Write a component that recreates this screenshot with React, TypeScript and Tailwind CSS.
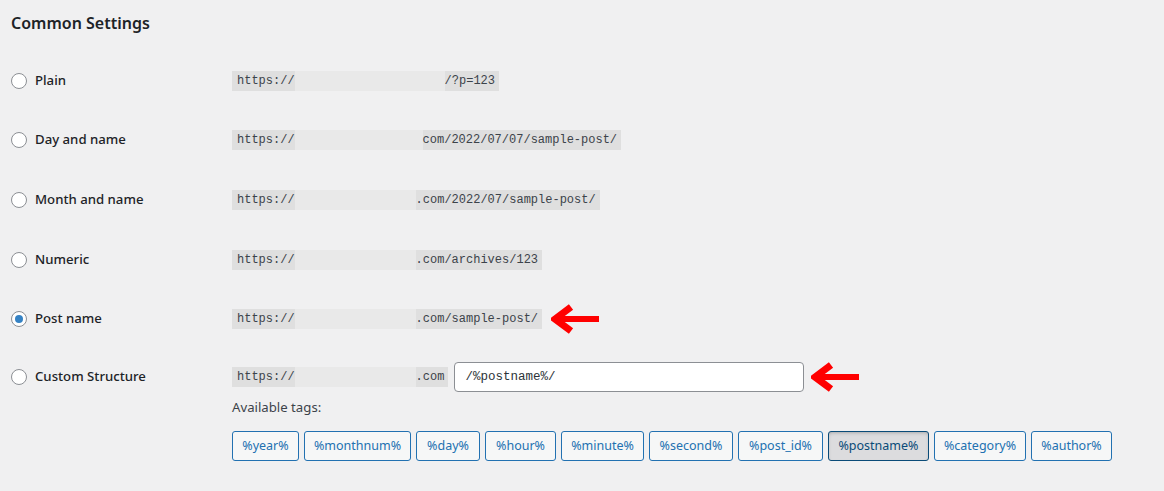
import React from "react";

const rows = [
  { label: "Plain", blur: "w-[150px]", rest: "/?p=123", checked: false },
  { label: "Day and name", blur: "w-[128px]", rest: "com/2022/07/07/sample-post/", checked: false },
  { label: "Month and name", blur: "w-[121px]", rest: ".com/2022/07/sample-post/", checked: false },
  { label: "Numeric", blur: "w-[121px]", rest: ".com/archives/123", checked: false },
  { label: "Post name", blur: "w-[121px]", rest: ".com/sample-post/", checked: true, arrow: true },
];

const tags = [
  { name: "%year%", w: "w-[67px]" },
  { name: "%monthnum%", w: "w-[107px]" },
  { name: "%day%", w: "w-[64px]" },
  { name: "%hour%", w: "w-[71px]" },
  { name: "%minute%", w: "w-[83px]" },
  { name: "%second%", w: "w-[84px]" },
  { name: "%post_id%", w: "w-[85px]" },
  { name: "%postname%", w: "w-[101px]", active: true },
  { name: "%category%", w: "w-[92px]" },
  { name: "%author%", w: "w-[81px]" },
];

function Radio({ checked }: { checked?: boolean }) {
  return (
    <span className="flex h-4 w-4 shrink-0 items-center justify-center rounded-full border border-[#8c8f94] bg-white">
      {checked && <span className="h-2 w-2 rounded-full bg-[#3582c4]" />}
    </span>
  );
}

function Arrow() {
  return (
    <svg width="48" height="30" viewBox="0 0 48 30" className="shrink-0">
      <path d="M8 15 H48" stroke="#ff0000" strokeWidth="6" />
      <path d="M20 3 L4 15 L20 27" stroke="#ff0000" strokeWidth="7" fill="none" strokeLinejoin="miter" />
    </svg>
  );
}

function Code({ blur, rest }: { blur: string; rest: string }) {
  return (
    <code className="flex h-5 items-center bg-[#dfdfdf] pl-[5px] pr-1 font-['Liberation_Mono',monospace] text-[12px] text-[#3c434a]">
      <span>https://</span>
      <span className={`h-5 ${blur} bg-[#e9e9e9]`} />
      <span>{rest}</span>
    </code>
  );
}

export default function App() {
  return (
    <div className="h-[491px] w-[1164px] overflow-hidden bg-[#f0f0f1] pl-[11px] font-['Noto_Sans',sans-serif] text-[#1d2327]">
      <div className="h-[51px] pt-[12px]">
        <h2 className="text-[16px] font-semibold leading-[23px]">Common Settings</h2>
      </div>
      {rows.map((r) => (
        <div key={r.label} className="flex h-[59.6px] items-center">
          <div className="flex w-[221px] items-center gap-2">
            <Radio checked={r.checked} />
            <span className="text-[13.2px] font-medium">{r.label}</span>
          </div>
          <Code blur={r.blur} rest={r.rest} />
          {r.arrow && (
            <div className="ml-[9px]">
              <Arrow />
            </div>
          )}
        </div>
      ))}
      <div className="flex pt-[13px]">
        <div className="flex h-[30px] w-[221px] items-center gap-2">
          <Radio />
          <span className="text-[13.2px] font-medium">Custom Structure</span>
        </div>
        <div>
          <div className="flex h-[30px] items-center">
            <Code blur="w-[121px]" rest=".com" />
            <input
              readOnly
              value="/%postname%/"
              className="ml-[6px] h-[30px] w-[350px] rounded-[4px] border border-[#8c8f94] bg-white px-[10px] font-['Liberation_Mono',monospace] text-[12.5px] text-[#2c3338] outline-none"
            />
            <div className="ml-[7px]">
              <Arrow />
            </div>
          </div>
          <p className="mt-[6px] text-[13.2px] leading-[19px] text-[#3c434a]">Available tags:</p>
          <div className="mt-[14px] flex gap-[5px]">
            {tags.map((t) => (
              <button
                key={t.name}
                className={`${t.w} h-[30px] rounded-[3px] border text-[12.5px] ${
                  t.active
                    ? "border-[#0a4b78] bg-[#dcdcde] text-[#0a4b78] shadow-[inset_0_2px_5px_-3px_rgba(0,0,0,0.5)]"
                    : "border-[#2271b1] bg-[#f6f7f7] text-[#2271b1]"
                }`}
              >
                {t.name}
              </button>
            ))}
          </div>
        </div>
      </div>
    </div>
  );
}
